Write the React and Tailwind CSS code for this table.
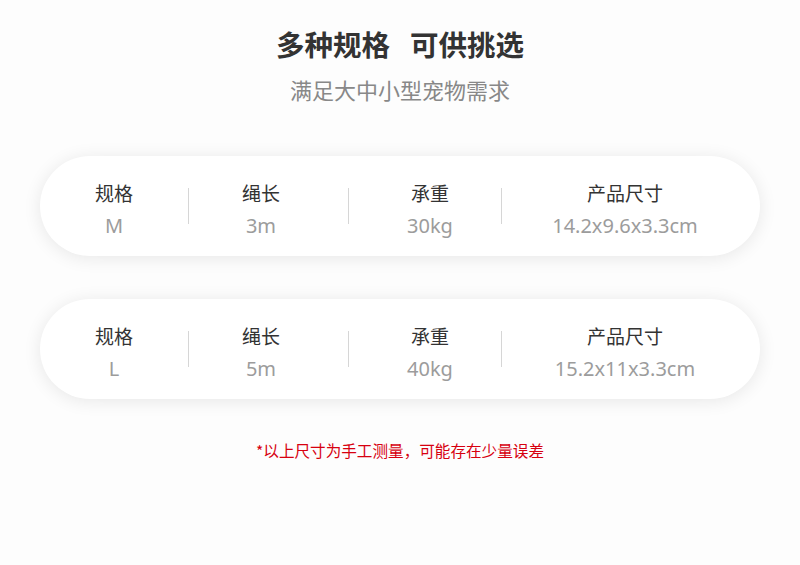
import React from 'react';

const cjk = "font-['Noto_Sans_CJK_SC','Noto_Sans',sans-serif]";

// 规格データ
const specs = [
  { size: 'M', rope: '3m', load: '30kg', dims: '14.2x9.6x3.3cm' },
  { size: 'L', rope: '5m', load: '40kg', dims: '15.2x11x3.3cm' },
];

const Cell = ({ label, value, className = '' }) => (
  <div className={`flex flex-col items-center pt-[7px] ${className}`}>
    <div className="text-[19px] leading-[22px] text-[#333]">{label}</div>
    <div className="mt-[10px] text-[20px] leading-[24px] text-[#9c9c9c] font-['Noto_Sans','Noto_Sans_CJK_SC',sans-serif]">{value}</div>
  </div>
);

const Sep = () => <div className="w-px h-[36px] bg-[#d6d6d6]" />;

const SpecRow = ({ spec }) => (
  <div className="mx-[40px] h-[100px] rounded-full bg-white shadow-[0_2px_18px_rgba(0,0,0,0.09)] flex items-center">
    <Cell label="规格" value={spec.size} className="w-[148px]" />
    <Sep />
    <Cell label="绳长" value={spec.rope} className="w-[159px] pr-[15px]" />
    <Sep />
    <Cell label="承重" value={spec.load} className="w-[152px] pl-[10px]" />
    <Sep />
    <Cell label="产品尺寸" value={spec.dims} className="flex-1 pr-[12px]" />
  </div>
);

export default function App() {
  return (
    <div className={`w-[800px] h-[565px] bg-[#fdfdfd] ${cjk} flex flex-col items-center pt-[29px]`}>
      <h1 className="text-[28.5px] leading-[30px] font-bold text-[#333]">
        <span className="mr-[20px]">多种规格</span>可供挑选
      </h1>
      <p className="mt-[17px] text-[22px] leading-[26px] text-[#888]">满足大中小型宠物需求</p>
      <div className="w-full mt-[54px] flex flex-col gap-[43px]">
        {specs.map(s => <SpecRow key={s.size} spec={s} />)}
      </div>
      <p className="mt-[41px] text-[15.6px] leading-[20px] text-[#d7000f]">*以上尺寸为手工测量，可能存在少量误差</p>
    </div>
  );
}
